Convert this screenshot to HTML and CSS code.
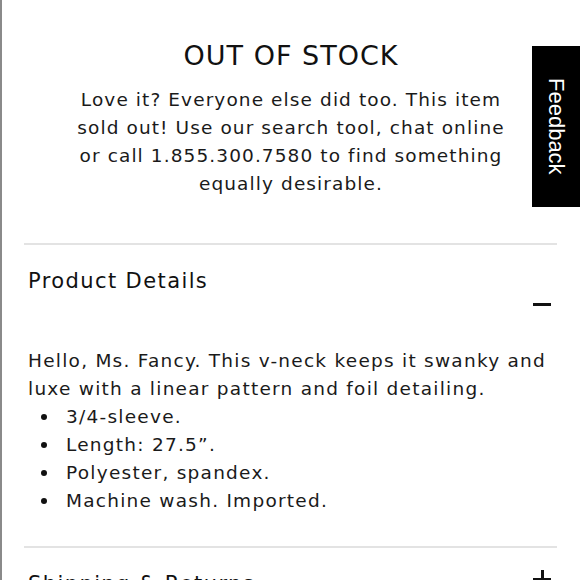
FILE: index.html
```html
<!DOCTYPE html>
<html>
<head>
<meta charset="utf-8">
<link rel="stylesheet" href="styles.css">
</head>
<body>
<div class="page">
  <section class="stock">
    <h1 class="stock-title">OUT OF STOCK</h1>
    <p class="stock-text">Love it? Everyone else did too. This item<br>sold out! Use our search tool, chat online<br>or call 1.855.300.7580 to find something<br>equally desirable.</p>
  </section>

  <section class="accordion">
    <div class="acc-item open">
      <div class="acc-head">
        <h2 class="acc-title">Product Details</h2>
        <span class="acc-icon minus"></span>
      </div>
      <div class="acc-body">
        <p class="desc">Hello, Ms. Fancy. This v-neck keeps it swanky and<br>luxe with a linear pattern and foil detailing.</p>
        <ul class="bullets">
          <li>3/4-sleeve.</li>
          <li>Length: 27.5”.</li>
          <li>Polyester, spandex.</li>
          <li>Machine wash. Imported.</li>
        </ul>
      </div>
    </div>
    <div class="acc-item">
      <div class="acc-head closed">
        <h2 class="acc-title">Shipping &amp; Returns</h2>
        <span class="acc-icon plus"></span>
      </div>
    </div>
  </section>

  <div class="feedback"><span class="feedback-label">Feedback</span></div>
</div>
</body>
</html>
```

FILE: styles.css
```css
html, body {
  margin: 0;
  padding: 0;
  background: #ffffff;
}
body {
  font-family: "DejaVu Sans", "Noto Sans", sans-serif;
  color: #1a1a1a;
  overflow: hidden;
}
.page {
  position: relative;
  height: 580px;
  border-left: 2px solid #8a8a8a;
  box-sizing: border-box;
  overflow: hidden;
}
.stock {
  text-align: center;
  padding-top: 40px;
}
.stock-title {
  margin: 0;
  font-weight: 400;
  font-size: 27px;
  line-height: 32px;
  letter-spacing: 1px;
  color: #111;
}
.stock-text {
  margin: 14px 0 0;
  font-size: 18.5px;
  font-weight: 400;
  line-height: 28px;
  letter-spacing: 1.1px;
}
.accordion {
  margin: 45px 23px 0 22px;
}
.acc-item {
  border-top: 2px solid #e3e3e3;
}
.acc-head {
  display: flex;
  justify-content: space-between;
  padding: 22px 6px 0 4px;
}
.acc-title {
  margin: 0;
  font-size: 21px;
  font-weight: 400;
  line-height: 28px;
  letter-spacing: 1.4px;
  color: #111;
}
.acc-icon {
  position: relative;
  width: 18px;
  height: 18px;
  margin-top: 28px;
}
.acc-icon::before {
  content: "";
  position: absolute;
  left: 0;
  top: 8px;
  width: 18px;
  height: 3px;
  background: #111;
}
.plus::after {
  content: "";
  position: absolute;
  left: 7.5px;
  top: 0;
  width: 3px;
  height: 18px;
  background: #111;
}
.closed .acc-icon {
  margin-top: 0;
}
.acc-body {
  padding: 34px 0 31px 4px;
}
.desc {
  margin: 0;
  font-size: 18.5px;
  line-height: 28px;
  letter-spacing: 1.25px;
}
.bullets {
  margin: 0;
  padding: 0;
  list-style: none;
  font-size: 18.5px;
  line-height: 28px;
  letter-spacing: 1.25px;
}
.bullets li {
  display: flex;
  align-items: center;
}
.bullets li::before {
  content: "";
  flex: none;
  width: 6px;
  height: 6px;
  border-radius: 50%;
  background: #111;
  margin: 0 19px 0 13px;
}
.feedback {
  position: absolute;
  top: 46px;
  right: 0;
  width: 48px;
  height: 161px;
  background: #000;
  display: flex;
  align-items: center;
  justify-content: center;
}
.feedback-label {
  writing-mode: vertical-rl;
  color: #fff;
  font-family: "Liberation Sans", Arial, sans-serif;
  font-size: 22px;
}
```
